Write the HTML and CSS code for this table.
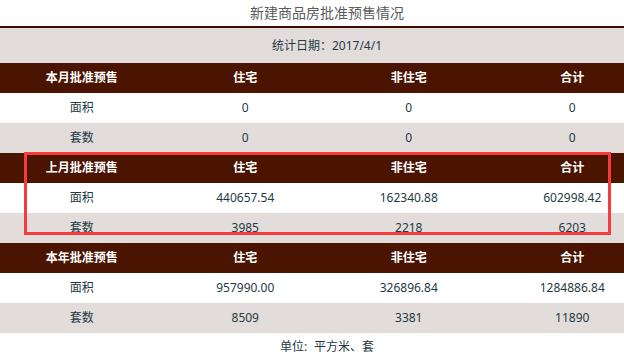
FILE: index.html
```html
<!DOCTYPE html>
<html lang="zh-CN">
<head>
<meta charset="utf-8">
<title>新建商品房批准预售情况</title>
<link rel="stylesheet" href="styles.css">
</head>
<body>
<div class="viewport">
  <div class="page">
    <div class="title">新建商品房批准预售情况</div>
    <div class="date">统计日期：2017/4/1</div>
    <table class="stats">
      <colgroup><col><col><col><col></colgroup>
      <tbody>
        <tr class="head"><th>本月批准预售</th><th>住宅</th><th>非住宅</th><th>合计</th></tr>
        <tr class="light"><td>面积</td><td>0</td><td>0</td><td>0</td></tr>
        <tr class="shade"><td>套数</td><td>0</td><td>0</td><td>0</td></tr>
        <tr class="head"><th>上月批准预售</th><th>住宅</th><th>非住宅</th><th>合计</th></tr>
        <tr class="light"><td>面积</td><td>440657.54</td><td>162340.88</td><td>602998.42</td></tr>
        <tr class="shade"><td>套数</td><td>3985</td><td>2218</td><td>6203</td></tr>
        <tr class="head"><th>本年批准预售</th><th>住宅</th><th>非住宅</th><th>合计</th></tr>
        <tr class="light"><td>面积</td><td>957990.00</td><td>326896.84</td><td>1284886.84</td></tr>
        <tr class="shade"><td>套数</td><td>8509</td><td>3381</td><td>11890</td></tr>
      </tbody>
    </table>
    <div class="unit"><span>单位:</span><span class="unit-value">平方米、套</span></div>
    <div class="highlight"></div>
  </div>
</div>
</body>
</html>
```
FILE: styles.css
```css
html, body {
  margin: 0;
  padding: 0;
  background: #ffffff;
}
.viewport {
  width: 624px;
  overflow: hidden;
}
.page {
  position: relative;
  width: 654px;
  font-family: "Noto Sans", "Noto Sans CJK SC", sans-serif;
  font-size: 12px;
  color: #1f3a44;
}
.title {
  height: 26px;
  line-height: 26px;
  text-align: center;
  font-size: 14px;
  color: #5a5a5a;
  border-bottom: 2px solid #3e0f00;
}
.date {
  height: 35px;
  line-height: 35px;
  text-align: center;
  background: #e2dcda;
}
.stats {
  width: 654px;
  border-collapse: collapse;
  table-layout: fixed;
}
.stats th,
.stats td {
  height: 30px;
  padding: 0;
  text-align: center;
  vertical-align: middle;
  font-size: 12px;
  line-height: 30px;
}
.stats .head {
  background: #4a1400;
  color: #ffffff;
}
.stats .head th {
  font-weight: bold;
}
.stats .light {
  background: #ffffff;
}
.stats .shade {
  background: #e2dcda;
}
.unit {
  height: 28px;
  line-height: 28px;
  text-align: center;
  color: #1f3a44;
}
.unit-value {
  margin-left: 7px;
}
.highlight {
  position: absolute;
  left: 24px;
  top: 152px;
  width: 581px;
  height: 77px;
  border: 3px solid #f43c3c;
}
```
